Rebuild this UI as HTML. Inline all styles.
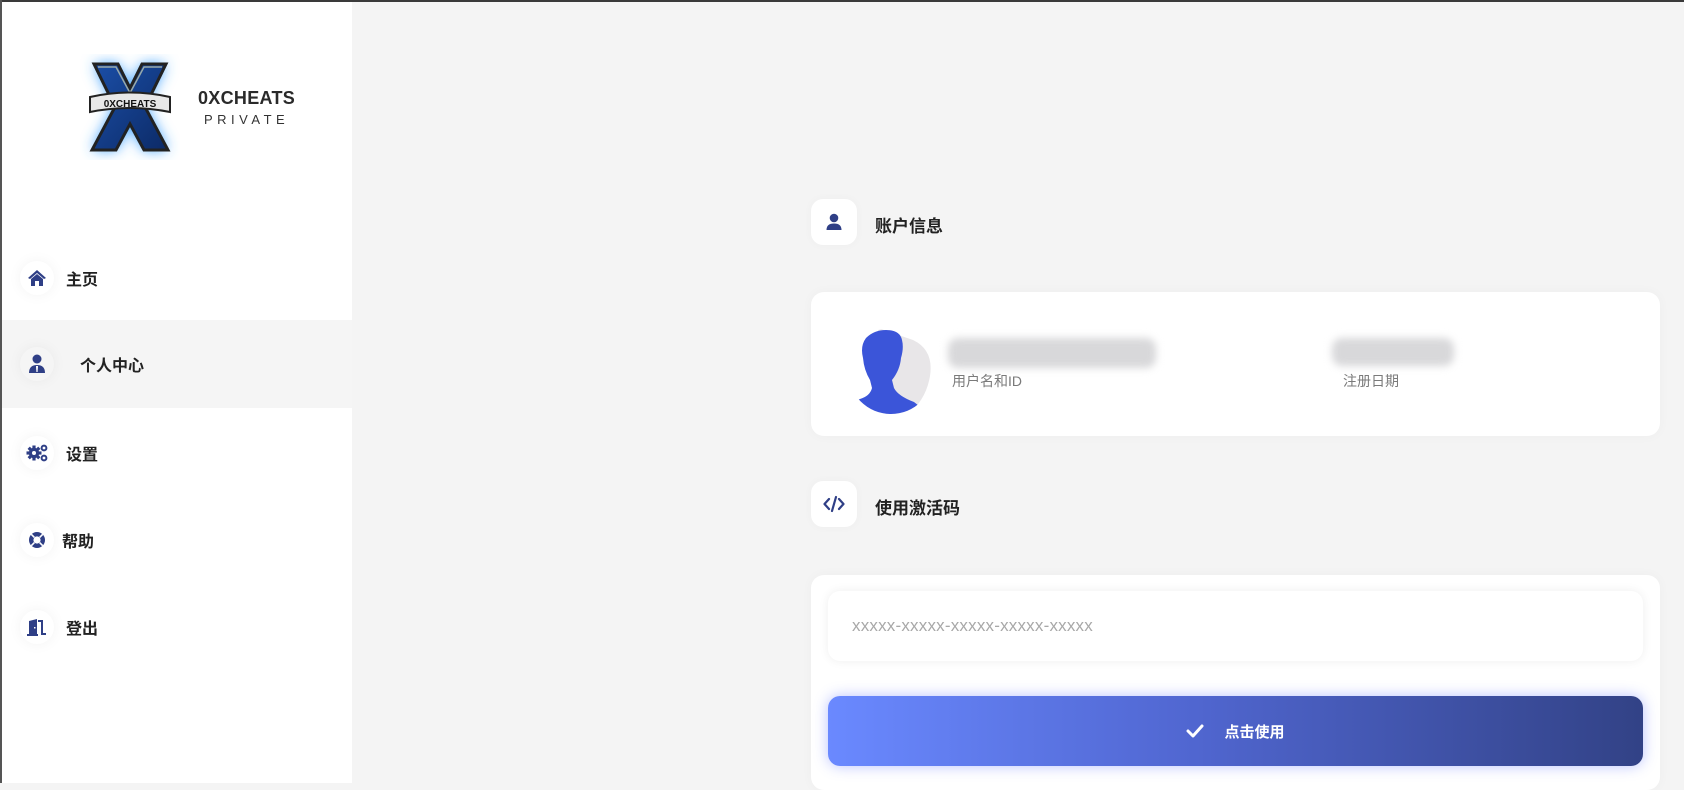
<!DOCTYPE html>
<html><head><meta charset="utf-8">
<style>
*{margin:0;padding:0;box-sizing:border-box}
body{width:1684px;height:783px;overflow:hidden;background:#f4f4f4;font-family:"Liberation Sans","Noto Sans CJK SC",sans-serif;position:relative;color:#222}
.topb{position:absolute;left:0;top:0;width:1684px;height:2px;background:#3a3a3a}
.leftb{position:absolute;left:0;top:0;width:2px;height:783px;background:#555}
.side{position:absolute;left:2px;top:2px;width:350px;height:781px;background:#fff}
.brand1{position:absolute;left:196px;top:86px;font-size:18px;font-weight:bold;color:#2a2a2a;letter-spacing:0.3px}
.brand2{position:absolute;left:202px;top:110px;font-size:13px;color:#333;letter-spacing:4.5px}
.item{position:absolute;left:0;width:350px;height:88px;display:flex;align-items:center}
.item .ic{width:34px;height:34px;margin-left:18px;border-radius:50%;box-shadow:0 0 14px rgba(0,0,0,0.05);display:flex;align-items:center;justify-content:center}
.item span{font-size:16px;font-weight:bold;color:#222;margin-left:12px}
.active{background:#f5f5f5}
.tbox{position:absolute;width:46px;height:46px;border-radius:12px;background:#fff;display:flex;align-items:center;justify-content:center;box-shadow:0 0 10px rgba(0,0,0,0.03)}
.ttl{position:absolute;font-size:17px;font-weight:bold;color:#222}
.card{position:absolute;left:811px;width:849px;background:#fff;border-radius:13px;box-shadow:0 0 12px rgba(0,0,0,0.03)}
.blur{position:absolute;background:#d8d8da;filter:blur(4px);border-radius:10px}
.lbl{position:absolute;font-size:14px;color:#7a7a7a}
.inp{position:absolute;left:828px;top:591px;width:815px;height:70px;background:#fff;border-radius:12px;box-shadow:0 0 10px rgba(0,0,0,0.07);font-size:17px;color:#a8a8a8;padding-left:24px;line-height:70px;letter-spacing:0.2px}
.btn{position:absolute;left:828px;top:696px;width:815px;height:70px;border-radius:12px;background:linear-gradient(90deg,#6a89ff,#5066d0 45%,#324286);box-shadow:0 0 14px rgba(100,120,255,0.45);display:flex;align-items:center;justify-content:center;color:#fff;font-weight:bold;font-size:15px}
</style></head><body>
<div class="side">
  <svg style="position:absolute;left:78px;top:52px" width="100" height="106" viewBox="0 0 100 106">
    <defs><filter id="g" x="-40%" y="-40%" width="180%" height="180%"><feGaussianBlur stdDeviation="7"/></filter>
    <linearGradient id="xb" x1="0" y1="0" x2="1" y2="1"><stop offset="0" stop-color="#1b4fa8"/><stop offset="1" stop-color="#0c2a66"/></linearGradient></defs>
    <path d="M14 10 L38 10 L50 34 L62 10 L86 10 L65 53 L88 96 L64 96 L50 70 L36 96 L12 96 L35 53 Z" fill="#3aa0ff" filter="url(#g)"/>
    <path d="M14 10 L38 10 L50 34 L62 10 L86 10 L65 53 L88 96 L64 96 L50 70 L36 96 L12 96 L35 53 Z" fill="url(#xb)" stroke="#222" stroke-width="3"/>
    <path d="M18 13 L36 13 L50 39 L64 13 L82 13" fill="none" stroke="#9aa" stroke-width="1.5"/>
    <path d="M10 43 Q50 34 90 43 L90 58 Q50 50 10 58 Z" fill="#e8e8e8" stroke="#222" stroke-width="2"/>
    <text x="50" y="53" font-family="Liberation Sans" font-weight="bold" font-size="10" text-anchor="middle" fill="#111">0XCHEATS</text>
  </svg>
  <div class="brand1">0XCHEATS</div>
  <div class="brand2">PRIVATE</div>
</div>
<div class="item" style="top:234px;left:2px"><div class="ic">
  <svg width="20" height="18" viewBox="0 0 20 18"><path d="M10 1 L19 9 L17 10 L10 4 L3 10 L1 9 Z" fill="#2f3f86"/><path d="M4 10 L10 5 L16 10 L16 17 L12 17 L12 12 L8 12 L8 17 L4 17 Z" fill="#2f3f86"/></svg>
</div><span>主页</span></div>
<div class="item active" style="top:320px;left:2px"><div class="ic">
  <svg width="18" height="20" viewBox="0 0 18 20"><circle cx="9" cy="5" r="4.5" fill="#2f3f86"/><path d="M1 19 Q1 11 9 11 Q17 11 17 19 Z" fill="#2f3f86"/><path d="M8 12 L10 12 L9.6 18 L8.4 18 Z" fill="#fff"/></svg>
</div><span style="margin-left:26px">个人中心</span></div>
<div class="item" style="top:409px;left:2px"><div class="ic">
  <svg width="22" height="18" viewBox="0 0 22 18">
    <g fill="#2f3f86" transform="translate(8 9)">
      <circle r="5.2"/>
      <rect x="-1.6" y="-7.5" width="3.2" height="15"/>
      <rect x="-1.6" y="-7.5" width="3.2" height="15" transform="rotate(45)"/>
      <rect x="-1.6" y="-7.5" width="3.2" height="15" transform="rotate(90)"/>
      <rect x="-1.6" y="-7.5" width="3.2" height="15" transform="rotate(135)"/>
    </g>
    <circle cx="8" cy="9" r="2" fill="#fff"/>
    <circle cx="18" cy="4" r="2.4" fill="none" stroke="#2f3f86" stroke-width="2"/>
    <circle cx="18" cy="14" r="2.4" fill="none" stroke="#2f3f86" stroke-width="2"/>
  </svg>
</div><span>设置</span></div>
<div class="item" style="top:496px;left:2px"><div class="ic">
  <svg width="18" height="18" viewBox="0 0 18 18"><circle cx="9" cy="9" r="8" fill="#2f3f86"/><circle cx="9" cy="9" r="3.6" fill="#fff"/><g stroke="#fff" stroke-width="1.6"><path d="M3.3 3.3 L6.4 6.4 M14.7 3.3 L11.6 6.4 M3.3 14.7 L6.4 11.6 M14.7 14.7 L11.6 11.6"/></g></svg>
</div><span style="margin-left:8px">帮助</span></div>
<div class="item" style="top:583px;left:2px"><div class="ic">
  <svg width="22" height="18" viewBox="0 0 22 18"><path d="M3 17 L3 3 L11 1 L11 17 Z" fill="#2f3f86"/><rect x="8" y="9" width="1.5" height="1.5" fill="#fff"/><path d="M12 3 L16 3 L16 16 L20 16" fill="none" stroke="#2f3f86" stroke-width="2"/><rect x="1" y="16" width="11" height="2" fill="#2f3f86"/></svg>
</div><span>登出</span></div>

<div class="tbox" style="left:811px;top:199px"><svg width="16" height="18" viewBox="0 0 16 18"><circle cx="8" cy="5" r="4.3" fill="#2f3f86"/><path d="M0.5 17 Q0.5 10.5 8 10.5 Q15.5 10.5 15.5 17 Z" fill="#2f3f86"/></svg></div>
<div class="ttl" style="left:875px;top:212px">账户信息</div>
<div class="card" style="top:292px;height:144px"></div>
<svg style="position:absolute;left:848px;top:328px" width="86" height="86" viewBox="0 0 86 86">
  <defs><clipPath id="c"><circle cx="43" cy="43" r="43"/></clipPath></defs>
  <g clip-path="url(#c)">
    <path d="M30 0 L65 12 Q86 22 82 48 Q78 72 60 86 L30 86 Z" fill="#e8e6e8"/>
    <path d="M38 2 Q52 2 54 12 Q56 20 53 30 Q52 42 44 52 L46 60 Q50 68 66 74 Q72 78 76 86 L0 86 Q2 74 12 71 Q22 68 24 60 L22 52 Q16 42 15 30 Q12 18 18 10 Q26 2 38 2 Z" fill="#3b55d9"/>
  </g>
</svg>
<div class="blur" style="left:948px;top:338px;width:208px;height:30px"></div>
<div class="lbl" style="left:952px;top:371px">用户名和ID</div>
<div class="blur" style="left:1332px;top:338px;width:122px;height:28px"></div>
<div class="lbl" style="left:1343px;top:371px">注册日期</div>

<div class="tbox" style="left:811px;top:481px"><svg width="22" height="18" viewBox="0 0 22 18"><path d="M6 4 L1.5 9 L6 14 M16 4 L20.5 9 L16 14 M13 2 L9 16" fill="none" stroke="#2f3f86" stroke-width="2.2" stroke-linecap="round" stroke-linejoin="round"/></svg></div>
<div class="ttl" style="left:875px;top:494px">使用激活码</div>
<div class="card" style="top:575px;height:215px"></div>
<div class="inp">xxxxx-xxxxx-xxxxx-xxxxx-xxxxx</div>
<div class="btn"><svg width="18" height="16" viewBox="0 0 18 16" style="margin-right:20px"><path d="M2 8 L7 13 L16 3" fill="none" stroke="#fff" stroke-width="3" stroke-linecap="round" stroke-linejoin="round"/></svg>点击使用</div>
<div class="topb"></div><div class="leftb"></div>
</body></html>
